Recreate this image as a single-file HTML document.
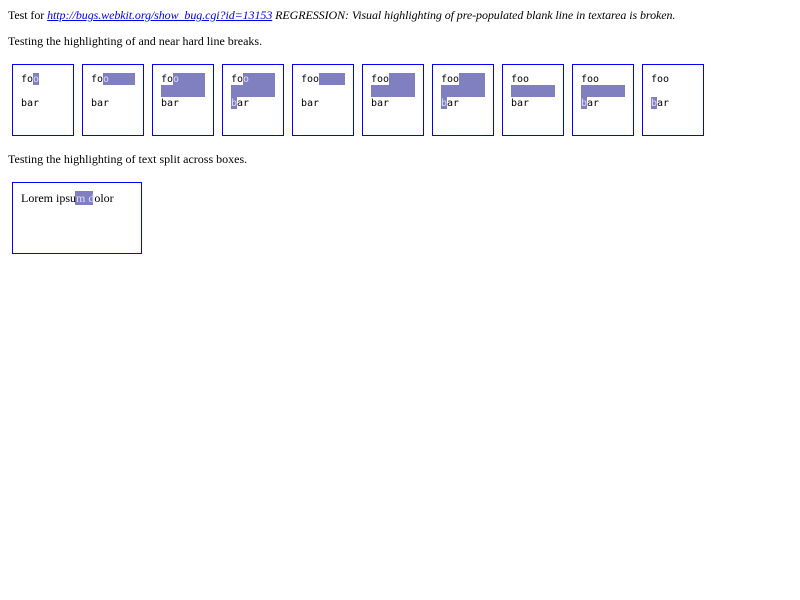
<!DOCTYPE html>
<html><head><style>
body{margin:0;background:#fff;font-family:"Liberation Serif",serif;font-size:12px;color:#000}
.p{position:absolute;left:8px;white-space:nowrap}
a{color:#00e}
.box{position:absolute;top:64px;width:60px;height:70px;border:1px solid #00f}
.h{position:absolute;background:#8080c0}
.t{position:absolute;font-family:"DejaVu Sans Mono",monospace;font-size:10px;line-height:12px;white-space:pre}
</style></head><body>
<div class="p" style="top:8px;letter-spacing:-0.08px">Test for <i><a href="#">http://bugs.webkit.org/show_bug.cgi?id=13153</a> REGRESSION: Visual highlighting of pre-populated blank line in textarea is broken.</i></div>
<div class="p" style="top:34px">Testing the highlighting of and near hard line breaks.</div>
<div class="p" style="top:152px">Testing the highlighting of text split across boxes.</div>

<div class="box" style="left:12px"></div>
<div class="box" style="left:82px"></div>
<div class="box" style="left:152px"></div>
<div class="box" style="left:222px"></div>
<div class="box" style="left:292px"></div>
<div class="box" style="left:362px"></div>
<div class="box" style="left:432px"></div>
<div class="box" style="left:502px"></div>
<div class="box" style="left:572px"></div>
<div class="box" style="left:642px"></div>

<div class="h" style="left:33px;top:73px;width:6px;height:12px"></div>
<div class="h" style="left:103px;top:73px;width:32px;height:12px"></div>
<div class="h" style="left:173px;top:73px;width:32px;height:12px"></div>
<div class="h" style="left:161px;top:85px;width:44px;height:12px"></div>
<div class="h" style="left:243px;top:73px;width:32px;height:12px"></div>
<div class="h" style="left:231px;top:85px;width:44px;height:12px"></div>
<div class="h" style="left:231px;top:97px;width:6px;height:12px"></div>
<div class="h" style="left:319px;top:73px;width:26px;height:12px"></div>
<div class="h" style="left:389px;top:73px;width:26px;height:12px"></div>
<div class="h" style="left:371px;top:85px;width:44px;height:12px"></div>
<div class="h" style="left:459px;top:73px;width:26px;height:12px"></div>
<div class="h" style="left:441px;top:85px;width:44px;height:12px"></div>
<div class="h" style="left:441px;top:97px;width:6px;height:12px"></div>
<div class="h" style="left:511px;top:85px;width:44px;height:12px"></div>
<div class="h" style="left:581px;top:85px;width:44px;height:12px"></div>
<div class="h" style="left:581px;top:97px;width:6px;height:12px"></div>
<div class="h" style="left:651px;top:97px;width:6px;height:12px"></div>

<div class="t" style="left:21px;top:74px">fo<span style="color:#ddf">o</span>

bar</div>
<div class="t" style="left:91px;top:74px">fo<span style="color:#ddf">o</span>

bar</div>
<div class="t" style="left:161px;top:74px">fo<span style="color:#ddf">o</span>

bar</div>
<div class="t" style="left:231px;top:74px">fo<span style="color:#ddf">o</span>

<span style="color:#ddf">b</span>ar</div>
<div class="t" style="left:301px;top:74px">foo

bar</div>
<div class="t" style="left:371px;top:74px">foo

bar</div>
<div class="t" style="left:441px;top:74px">foo

<span style="color:#ddf">b</span>ar</div>
<div class="t" style="left:511px;top:74px">foo

bar</div>
<div class="t" style="left:581px;top:74px">foo

<span style="color:#ddf">b</span>ar</div>
<div class="t" style="left:651px;top:74px">foo

<span style="color:#ddf">b</span>ar</div>

<div style="position:absolute;left:12px;top:182px;width:128px;height:70px;border:1px solid #00f"></div>
<div class="h" style="left:75px;top:191px;width:18px;height:14px"></div>
<div class="p" style="left:21px;top:191px">Lorem ipsu<span style="color:#ddf">m d</span>olor</div>
</body></html>
